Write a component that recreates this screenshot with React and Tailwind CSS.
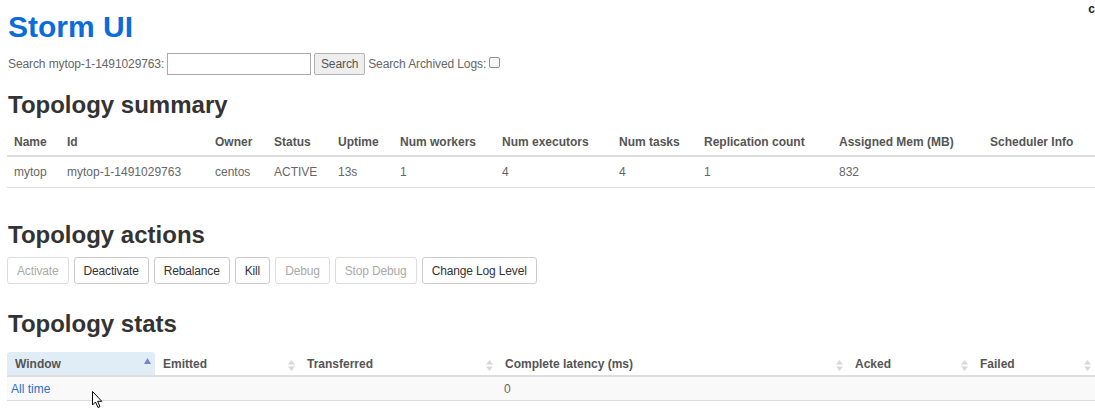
import React from 'react';

const summaryCols = [
  { label: 'Name', w: 'w-[53px]' },
  { label: 'Id', w: 'w-[148px]' },
  { label: 'Owner', w: 'w-[59px]' },
  { label: 'Status', w: 'w-[64px]' },
  { label: 'Uptime', w: 'w-[62px]' },
  { label: 'Num workers', w: 'w-[102px]' },
  { label: 'Num executors', w: 'w-[117px]' },
  { label: 'Num tasks', w: 'w-[85px]' },
  { label: 'Replication count', w: 'w-[135px]' },
  { label: 'Assigned Mem (MB)', w: 'w-[151px]' },
  { label: 'Scheduler Info', w: 'w-[112px]' },
];

const summaryRow = ['mytop', 'mytop-1-1491029763', 'centos', 'ACTIVE', '13s', '1', '4', '4', '1', '832', ''];

const statsCols = [
  { label: 'Window', w: 'w-[148px]', active: true },
  { label: 'Emitted', w: 'w-[144px]' },
  { label: 'Transferred', w: 'w-[198px]' },
  { label: 'Complete latency (ms)', w: 'w-[350px]' },
  { label: 'Acked', w: 'w-[125px]' },
  { label: 'Failed', w: 'w-[123px]' },
];

const actions = [
  { label: 'Activate', disabled: true },
  { label: 'Deactivate' },
  { label: 'Rebalance' },
  { label: 'Kill' },
  { label: 'Debug', disabled: true },
  { label: 'Stop Debug', disabled: true },
  { label: 'Change Log Level' },
];

function SortIcon({ active }) {
  if (active) {
    return (
      <svg width="7" height="6" viewBox="0 0 7 6" className="absolute right-[4px] top-[6px]">
        <path d="M3.5 0 L7 6 L0 6 Z" fill="#7b7fd6" />
      </svg>
    );
  }
  return (
    <svg width="7" height="11" viewBox="0 0 7 11" className="absolute right-[4px] top-[8px]">
      <path d="M3.5 0 L7 4.5 L0 4.5 Z" fill="#d8d8d8" />
      <path d="M3.5 11 L7 6.5 L0 6.5 Z" fill="#d8d8d8" />
    </svg>
  );
}

function Heading({ children, className }) {
  return (
    <h2 className={`text-[24px] font-bold text-[#333] leading-[26px] ${className}`}>{children}</h2>
  );
}

export default function App() {
  return (
    <div className="relative w-[1095px] h-[408px] overflow-hidden bg-white pl-[7px] font-['Liberation_Sans',Arial,sans-serif] text-[12px] text-[#666]">
      <span className="absolute right-[0px] top-0 text-[12px] font-bold text-[#222]">c</span>

      <h1 className="pt-[10px] pl-[1px] text-[30px] font-bold leading-[34px] text-[#0b6bd9]">Storm UI</h1>

      <div className="mt-[8px] flex items-center h-[24px] tracking-[-0.1px]">
        <span className="pl-[1px]">Search mytop-1-1491029763:</span>
        <input className="ml-[3px] w-[144px] h-[22px] border border-[#aaa] bg-white" />
        <button className="ml-[3px] h-[22px] w-[51px] border border-[#b3b3b3] rounded-[2px] bg-[#eee] text-[12px] text-[#555]">Search</button>
        <span className="ml-[3px]">Search Archived Logs:</span>
        <span className="ml-[3px] mb-[3px] inline-block w-[11px] h-[11px] border border-[#8f8f8f] rounded-[2px] bg-[#f7f7f7]"></span>
      </div>

      <Heading className="mt-[16px] pl-[1px]">Topology summary</Heading>

      <div className="mt-[10px]">
        <div className="flex h-[29px] items-center border-b-2 border-[#ddd] font-bold text-[#555]">
          {summaryCols.map((c) => (
            <div key={c.label} className={`${c.w} shrink-0 pl-[7px]`}>{c.label}</div>
          ))}
        </div>
        <div className="flex h-[31px] items-center border-b border-[#ddd]">
          {summaryRow.map((v, i) => (
            <div key={i} className={`${summaryCols[i].w} shrink-0 pl-[7px]`}>{v}</div>
          ))}
        </div>
      </div>

      <Heading className="mt-[34px] pl-[1px]">Topology actions</Heading>

      <div className="mt-[9px] flex gap-[5px]">
        {actions.map((a) => (
          <button
            key={a.label}
            className={`h-[27px] px-[9px] border rounded-[3px] bg-white text-[12px] tracking-[-0.15px] ${a.disabled ? 'border-[#ddd] text-[#aaa]' : 'border-[#ccc] text-[#333]'}`}
          >
            {a.label}
          </button>
        ))}
      </div>

      <Heading className="mt-[27px] pl-[1px]">Topology stats</Heading>

      <div className="mt-[15px]">
        <div className="flex h-[25px] items-center border-b-2 border-[#ddd] font-bold text-[#555]">
          {statsCols.map((c) => (
            <div
              key={c.label}
              className={`relative h-full flex items-center ${c.w} shrink-0 pl-[8px] ${c.active ? 'bg-[#e1edf6] rounded-t-[3px]' : ''}`}
            >
              {c.label}
              <SortIcon active={c.active} />
            </div>
          ))}
        </div>
        <div className="flex h-[24px] items-center border-b border-[#ddd] bg-[#f9f9f9]">
          <div className="w-[148px] shrink-0 pl-[4px] text-[#2a6fd0]">All time</div>
          <div className="w-[144px] shrink-0"></div>
          <div className="w-[198px] shrink-0"></div>
          <div className="w-[350px] shrink-0 pl-[7px]">0</div>
        </div>
      </div>

      <svg width="12" height="18" viewBox="0 0 12 18" className="absolute left-[92px] top-[391px]">
        <path d="M0.5 0.5 L0.5 14 L3.5 11 L6 16.5 L8 15.5 L5.6 10.3 L9.8 10.3 Z" fill="#fff" stroke="#000" strokeWidth="1" />
      </svg>
    </div>
  );
}
